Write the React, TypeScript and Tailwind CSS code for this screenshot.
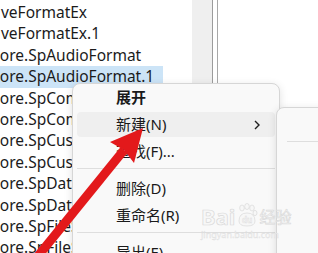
import React from "react";

const rows = [
  { text: "veFormatEx", clip: false },
  { text: "veFormatEx.1", clip: false },
  { text: "Core.SpAudioFormat", clip: true },
  { text: "Core.SpAudioFormat.1", clip: true, selected: true },
  { text: "Core.SpCompressedLexicon", clip: true },
  { text: "Core.SpCompressedLexicon.1", clip: true },
  { text: "Core.SpCustomStream", clip: true },
  { text: "Core.SpCustomStream.1", clip: true },
  { text: "Core.SpDataKey", clip: true },
  { text: "Core.SpDataKey.1", clip: true },
  { text: "Core.SpFileStream", clip: true },
  { text: "Core.SpFileStream.1", clip: true },
];

function MenuItem({
  label,
  bold,
  hover,
  sub,
}: {
  label: string;
  bold?: boolean;
  hover?: boolean;
  sub?: boolean;
}) {
  return (
    <div className="h-[27px] mx-[4px] py-[1px]">
      <div
        className={
          "h-full rounded-[4px] flex items-center pl-[39px] pr-[12px] " +
          (hover ? "bg-[#efefef]" : "")
        }
      >
        <span className={"flex-1 text-[15px] text-[#1a1a1a] " + (bold ? "font-bold" : "")}>
          {label}
        </span>
        {sub && (
          <svg width="8" height="12" viewBox="0 0 8 12" className="mr-[2px]">
            <path d="M2 2 L6 6 L2 10" fill="none" stroke="#1f1f1f" strokeWidth="1.4" />
          </svg>
        )}
      </div>
    </div>
  );
}

function Separator() {
  return (
    <div className="h-[10px] pt-[3px] mx-[4px]">
      <div className="h-px bg-[#dedede]" />
    </div>
  );
}

export default function App() {
  return (
    <div
      className="relative w-[318px] h-[253px] overflow-hidden bg-white flex"
      style={{ fontFamily: '"Noto Sans", "Noto Sans CJK SC", sans-serif' }}
    >
      {/* tree list */}
      <div className="w-[192px] pt-[2px] flex flex-col overflow-hidden">
        {rows.map((r, i) => (
          <div
            key={i}
            className={
              "h-[21.4px] shrink-0 flex items-center whitespace-nowrap text-[15.5px] text-[#1b1b1b] " +
              (r.selected ? "bg-[#cce4f7] w-[163px]" : "")
            }
          >
            <span className={r.clip ? "-ml-[10px]" : "ml-px"}>{r.text}</span>
          </div>
        ))}
      </div>
      {/* scroll strip + splitter */}
      <div className="w-[21px] bg-[#efefef] border-r border-[#9c9c9c]" />
      <div className="w-[5px] border-r border-[#a8a8a8]" />
      <div className="flex-1" />

      {/* context menu */}
      <div className="absolute left-[72px] top-[83px] w-[208px] h-[200px] bg-[#f9f9f9] border border-[#d6d6d6] rounded-[8px] shadow-[0_2px_8px_rgba(0,0,0,0.12)] flex flex-col">
        <MenuItem label="展开" bold />
        <MenuItem label="新建(N)" hover sub />
        <MenuItem label="查找(F)..." />
        <Separator />
        <MenuItem label="删除(D)" />
        <MenuItem label="重命名(R)" />
        <Separator />
        <MenuItem label="导出(E)" />
      </div>

      {/* submenu */}
      <div className="absolute left-[276px] top-[107px] w-[70px] h-[170px] bg-[#f9f9f9] border border-[#d6d6d6] rounded-[8px] shadow-[0_2px_8px_rgba(0,0,0,0.12)]">
        <div className="mt-[33px] ml-[10px] h-px bg-[#dedede]" />
      </div>

      {/* watermark */}
      <div className="absolute left-[201px] top-[203px] flex flex-col items-start pointer-events-none">
        <div className="flex items-end gap-[1px]">
          <span className="text-[22px] leading-[22px] font-bold text-[#f7f7f7] [-webkit-text-stroke:0.7px_#d9d9d9]">
            Bai
          </span>
          <svg width="22" height="24" viewBox="0 0 22 24">
            <g fill="#f7f7f7" stroke="#d9d9d9" strokeWidth="0.7">
              <ellipse cx="6" cy="5" rx="2.3" ry="3" />
              <ellipse cx="11" cy="3.5" rx="2.3" ry="3" />
              <ellipse cx="16" cy="5" rx="2.3" ry="3" />
              <ellipse cx="19" cy="10" rx="2" ry="2.6" />
              <path d="M3 18 Q3 10 11 10 Q19 10 19 18 Q19 23 11 23 Q3 23 3 18 Z" />
            </g>
            <text x="6" y="20" fontSize="8" fontWeight="bold" fill="#f7f7f7" stroke="#d9d9d9" strokeWidth="0.4">
              du
            </text>
          </svg>
          <span className="text-[16px] leading-[20px] text-[#f7f7f7] [-webkit-text-stroke:0.6px_#d9d9d9]">
            经验
          </span>
        </div>
        <span className="text-[9px] leading-[11px] mt-[2px] text-[#f2f2f2] [-webkit-text-stroke:0.3px_#dcdcdc]">
          jingyan.baidu.com
        </span>
      </div>

      {/* red arrow annotation */}
      <svg className="absolute inset-0 pointer-events-none" width="318" height="253" viewBox="0 0 318 253">
        <line x1="38" y1="256" x2="124" y2="150" stroke="#e3191b" strokeWidth="9" />
        <polygon points="143,128 110,142 124,150 134,163" fill="#e3191b" />
      </svg>
    </div>
  );
}
